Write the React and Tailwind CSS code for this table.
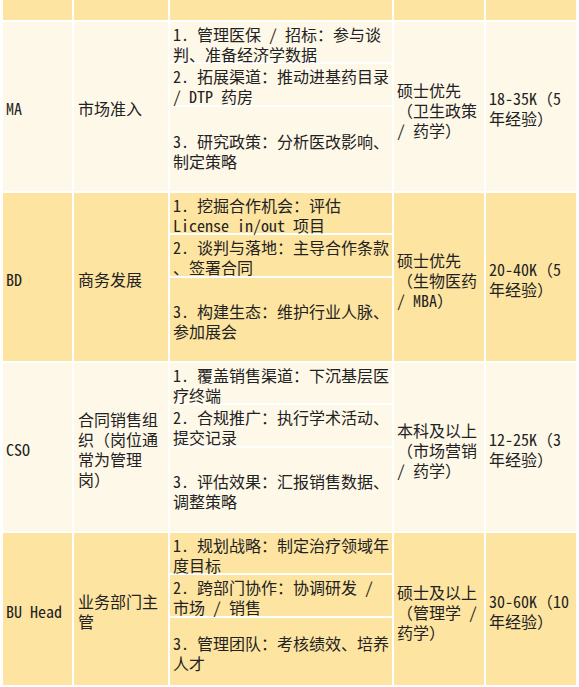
import React from "react";

const rows = [
  {
    tone: "light",
    h: "h-[169px]",
    code: "MA",
    name: ["市场准入"],
    subs: [
      ["1. 管理医保 / 招标：参与谈", "判、准备经济学数据"],
      ["2. 拓展渠道：推动进基药目录", "/ DTP 药房"],
      ["3. 研究政策：分析医改影响、", "制定策略"],
    ],
    edu: ["硕士优先", "（卫生政策", "/ 药学）"],
    pay: ["18-35K（5", "年经验）"],
  },
  {
    tone: "dark",
    h: "h-[168px]",
    code: "BD",
    name: ["商务发展"],
    subs: [
      ["1. 挖掘合作机会：评估", "License in/out 项目"],
      ["2. 谈判与落地：主导合作条款", "、签署合同"],
      ["3. 构建生态：维护行业人脉、", "参加展会"],
    ],
    edu: ["硕士优先", "（生物医药", "/ MBA）"],
    pay: ["20-40K（5", "年经验）"],
  },
  {
    tone: "light",
    h: "h-[168px]",
    code: "CSO",
    name: ["合同销售组", "织（岗位通", "常为管理", "岗）"],
    subs: [
      ["1. 覆盖销售渠道：下沉基层医", "疗终端"],
      ["2. 合规推广：执行学术活动、", "提交记录"],
      ["3. 评估效果：汇报销售数据、", "调整策略"],
    ],
    edu: ["本科及以上", "（市场营销", "/ 药学）"],
    pay: ["12-25K（3", "年经验）"],
  },
  {
    tone: "dark",
    h: "h-[152px]",
    code: "BU Head",
    name: ["业务部门主", "管"],
    subs: [
      ["1. 规划战略：制定治疗领域年", "度目标"],
      ["2. 跨部门协作：协调研发 /", "市场 / 销售"],
      ["3. 管理团队：考核绩效、培养", "人才"],
    ],
    edu: ["硕士及以上", "（管理学 /", "药学）"],
    pay: ["30-60K（10", "年经验）"],
  },
];

function Lines({ lines }) {
  return (
    <div>
      {lines.map((l, i) => (
        <div key={i} className="whitespace-pre">
          {l}
        </div>
      ))}
    </div>
  );
}

export default function App() {
  return (
    <div
      className="w-[579px] h-[687px] bg-white pl-[3px] overflow-hidden text-[16px] leading-[20px] text-[#222222]"
      style={{ fontFamily: '"Noto Sans Mono CJK SC", "Noto Sans CJK SC", monospace' }}
    >
      <div className="grid grid-cols-[69px_94px_222px_90px_90px] gap-[2px]">
        {[0, 1, 2, 3, 4].map((i) => (
          <div key={i} className="h-[20px] bg-[#fde4a0]" />
        ))}
        {rows.map((r) => {
          const bg = r.tone === "dark" ? "bg-[#fde4a0]" : "bg-[#fef8e8]";
          return (
            <React.Fragment key={r.code}>
              <div className={`${r.h} ${bg} flex items-center pl-[3px] pt-[3px]`}>{r.code}</div>
              <div className={`${r.h} ${bg} flex items-center pl-[4px] pt-[3px]`}>
                <Lines lines={r.name} />
              </div>
              <div className={`${r.h} flex flex-col gap-[2px]`}>
                <div className={`h-[40px] ${bg} pl-[3px] pt-[2px]`}>
                  <Lines lines={r.subs[0]} />
                </div>
                <div className={`h-[41px] ${bg} pl-[3px] pt-[2px]`}>
                  <Lines lines={r.subs[1]} />
                </div>
                <div className={`flex-1 ${bg} pl-[3px] flex items-center pt-[3px]`}>
                  <Lines lines={r.subs[2]} />
                </div>
              </div>
              <div className={`${r.h} ${bg} flex items-center pl-[3px] pt-[6px]`}>
                <Lines lines={r.edu} />
              </div>
              <div className={`${r.h} ${bg} flex items-center pl-[3px] pt-[3px]`}>
                <Lines lines={r.pay} />
              </div>
            </React.Fragment>
          );
        })}
      </div>
    </div>
  );
}
